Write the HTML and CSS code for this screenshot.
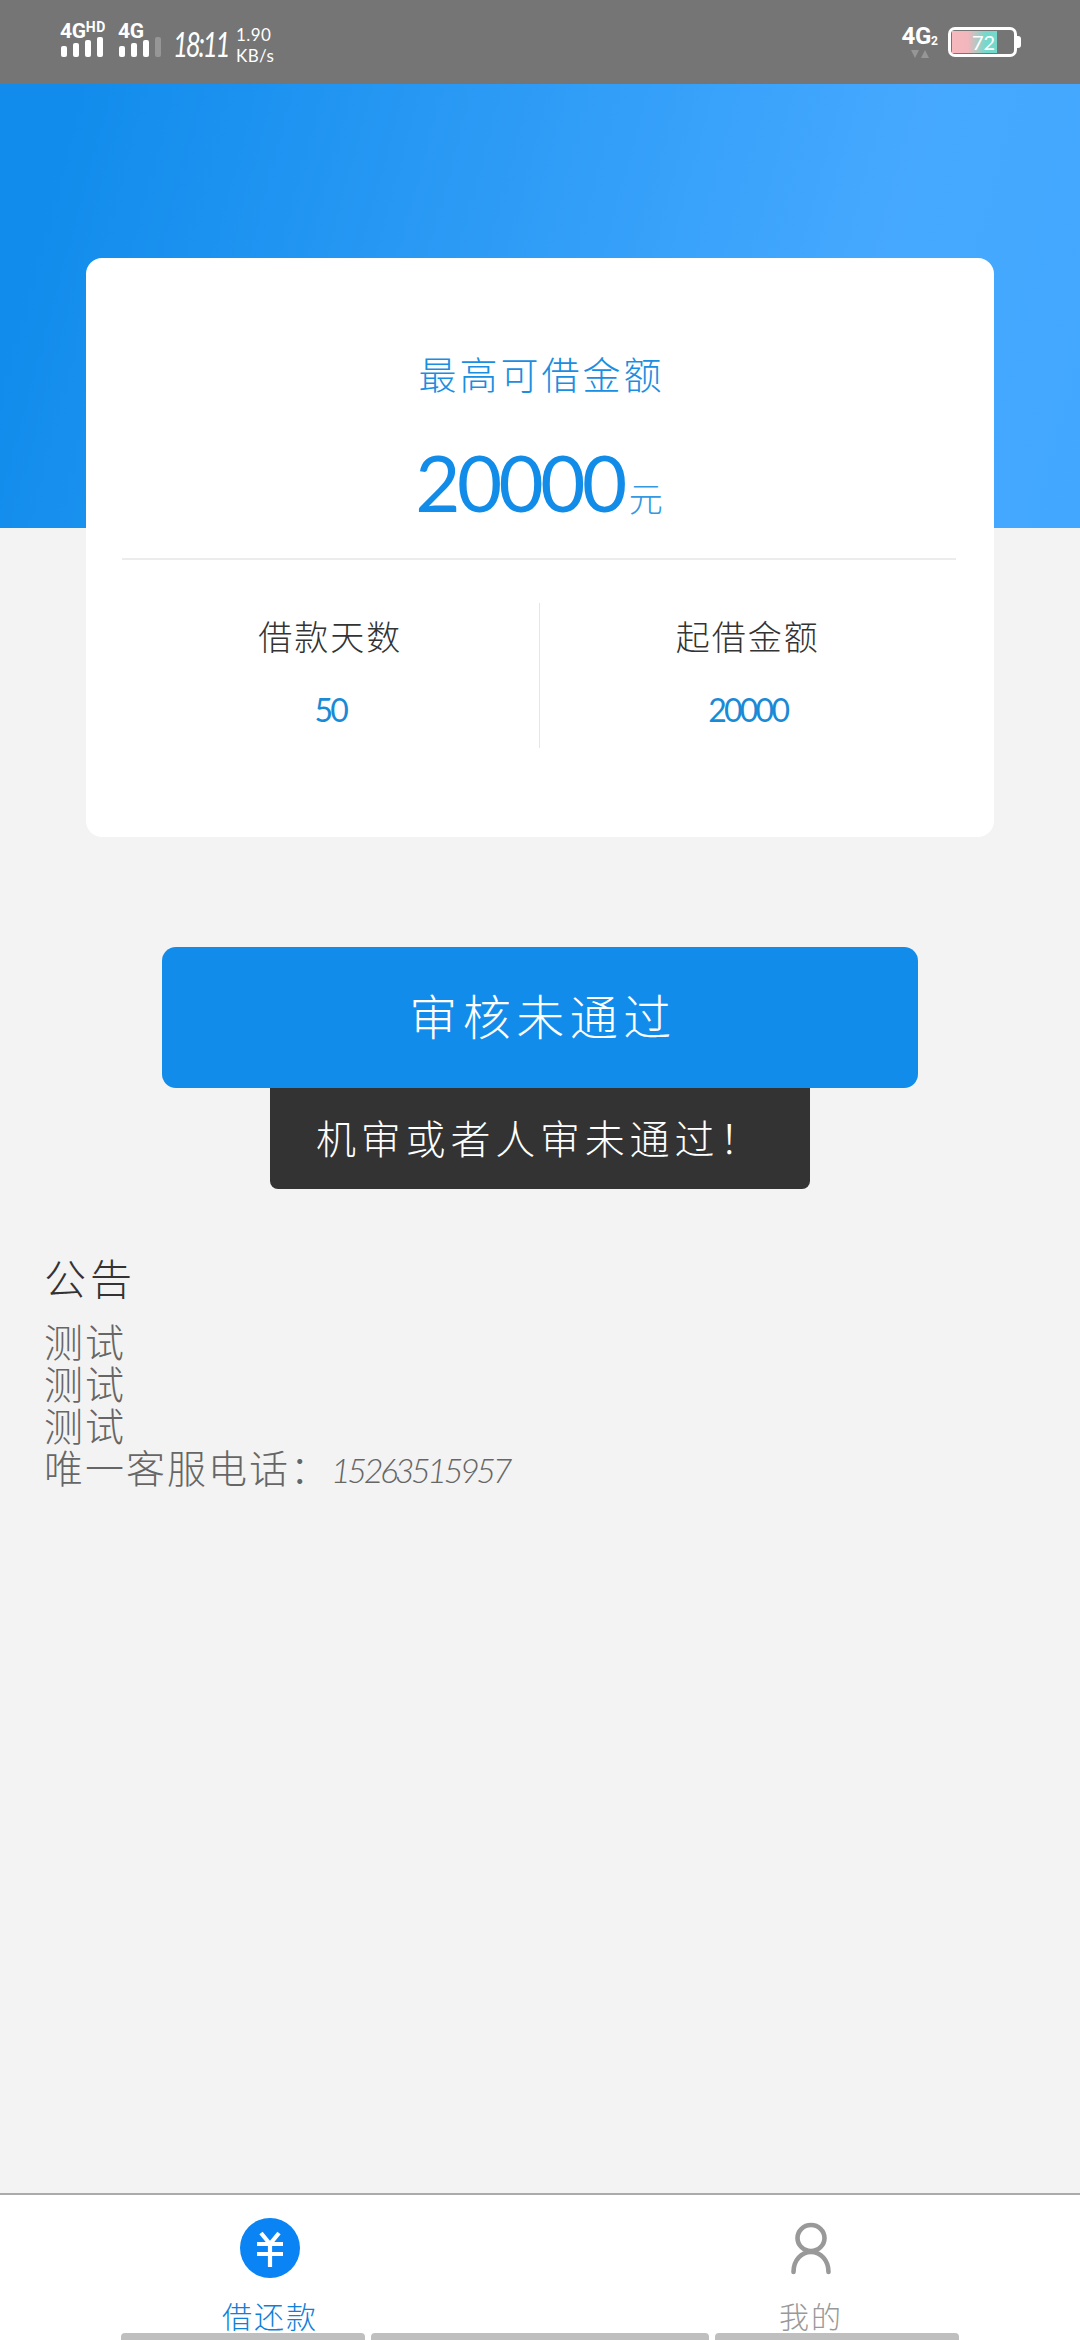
FILE: index.html
```html
<!DOCTYPE html>
<html lang="zh-CN">
<head>
<meta charset="utf-8">
<title>借还款</title>
<link rel="stylesheet" href="styles.css">
</head>
<body>
<div class="screen">
  <header class="status">
    <div class="status-left">
      <div class="signal signal-first">
        <div class="net"><span>4G</span><span class="hd">HD</span></div>
        <div class="bars"><i class="b1"></i><i class="b2"></i><i class="b3"></i><i class="b4"></i></div>
      </div>
      <div class="signal signal-second">
        <div class="net"><span>4G</span></div>
        <div class="bars"><i class="b1"></i><i class="b2"></i><i class="b3"></i><i class="b4 off"></i></div>
      </div>
      <div class="time"><span class="time-text">18:11</span></div>
      <div class="speed"><span>1.90</span><span>KB/s</span></div>
    </div>
    <div class="status-right">
      <div class="sim2">
        <div class="net"><span>4G</span><span class="two">2</span></div>
        <svg class="updown" width="18" height="8" viewBox="0 0 18 8"><path d="M0 0h8L4 8zM10 8h8L14 0z" fill="#969696"/></svg>
      </div>
      <div class="battery">
        <div class="cell"><div class="charge"></div><span class="level">72</span></div>
        <div class="nub"></div>
      </div>
    </div>
  </header>

  <main class="main">
    <section class="card">
      <div class="quota-title">最高可借金额</div>
      <div class="quota"><span class="quota-num">20000</span><span class="quota-unit">元</span></div>
      <div class="stats">
        <div class="stat">
          <div class="stat-label">借款天数</div>
          <div class="stat-value">50</div>
        </div>
        <div class="stat stat-divided">
          <div class="stat-label">起借金额</div>
          <div class="stat-value">20000</div>
        </div>
      </div>
    </section>

    <button class="action" type="button">审核未通过</button>
    <div class="toast">机审或者人审未通过！</div>

    <section class="notice">
      <h2 class="notice-title">公告</h2>
      <p class="notice-line">测试</p>
      <p class="notice-line">测试</p>
      <p class="notice-line">测试</p>
      <p class="notice-line">唯一客服电话：<span class="phone">15263515957</span></p>
    </section>
  </main>

  <nav class="tabs">
    <div class="tab tab-active">
      <svg class="tab-icon" width="60" height="60" viewBox="0 0 60 60">
        <circle cx="30" cy="30" r="30" fill="#0a84f4"/>
        <path d="M21 15l9 11 9-11M17 26h26M17 36h26M30 26v23" fill="none" stroke="#fff" stroke-width="4.2"/>
      </svg>
      <span class="tab-label">借还款</span>
    </div>
    <div class="tab">
      <svg class="tab-icon" width="60" height="60" viewBox="0 0 60 60">
        <ellipse cx="30" cy="20" rx="13.5" ry="13" fill="none" stroke="#999" stroke-width="4.6"/>
        <path d="M12.5 54c0-12 8-20 17.5-20s17.5 8 17.5 20" fill="none" stroke="#999" stroke-width="4.6" stroke-linecap="round"/>
      </svg>
      <span class="tab-label">我的</span>
    </div>
    <div class="nav-strip"><i class="strip-a"></i><i class="strip-b"></i><i class="strip-c"></i></div>
  </nav>
</div>
</body>
</html>
```
FILE: styles.css
```css
* { box-sizing: border-box; }
html, body { margin: 0; padding: 0; }
body {
  width: 1080px;
  height: 2340px;
  overflow: hidden;
  font-family: "Noto Sans CJK SC", "Noto Sans", sans-serif;
  font-weight: 300;
}
.screen { display: flex; flex-direction: column; width: 1080px; height: 2340px; background: #f3f3f3; }

/* status bar */
.status {
  flex: 0 0 84px;
  display: flex;
  justify-content: space-between;
  background: #757575;
  color: #fff;
  padding: 0 59px 0 60px;
}
.status-left { display: flex; align-items: flex-start; }
.signal { display: flex; flex-direction: column; padding-top: 21px; }
.signal-first { width: 58px; }
.signal-second { width: 55px; }
.net { display: flex; font-family: Roboto, sans-serif; font-weight: 700; font-size: 21px; line-height: 20px; height: 20px; letter-spacing: -.3px; }
.hd { font-size: 14px; line-height: 13px; letter-spacing: .5px; }
.bars { display: flex; align-items: flex-end; gap: 6px; height: 20px; margin-top: -4px; padding-left: 1px; }
.bars i { display: block; width: 6px; background: #fff; border-radius: 2px; }
.b1 { height: 11px; }
.b2 { height: 14px; }
.b3 { height: 17px; }
.b4 { height: 20px; }
.bars .off { background: #969696; }
.time { font-family: Lato, sans-serif; font-weight: 400; font-style: italic; font-size: 35px; line-height: 30px; padding-top: 28px; width: 63px; white-space: nowrap; }
.time-text { display: inline-block; letter-spacing: -3px; transform: scaleX(.74); transform-origin: left center; }
.speed { display: flex; flex-direction: column; font-family: Lato, sans-serif; font-weight: 400; font-size: 17px; line-height: 21px; padding-top: 24px; letter-spacing: .4px; }
.status-right { display: flex; align-items: flex-start; }
.sim2 { display: flex; flex-direction: column; align-items: center; width: 33px; padding-top: 26px; margin-right: 12px; }
.sim2 .net { font-size: 24px; }
.two { font-size: 12px; line-height: 30px; }
.updown { margin-top: 4px; }
.battery { display: flex; align-items: center; padding-top: 27px; }
.cell {
  position: relative;
  width: 69px;
  height: 30px;
  border: 3px solid #fff;
  border-radius: 7px;
  padding: 1px;
}
.charge { width: 45px; height: 22px; background: linear-gradient(90deg, #f6b8bd 0, #f3b6bc 35%, #74d9cb 75%, #74d9cb 100%); }
.level { position: absolute; left: 21px; top: 0; font-family: Lato, sans-serif; font-weight: 400; font-size: 20px; line-height: 24px; color: #fff; }
.nub { width: 4px; height: 12px; background: #fff; border-radius: 0 3px 3px 0; }

/* body */
.main {
  flex: 1 1 auto;
  display: flex;
  flex-direction: column;
  padding-top: 174px;
  background: linear-gradient(105deg, #118cec 6%, #46a9ff 78%, #42a7ff 100%) top left / 100% 444px no-repeat;
}
.card {
  align-self: center;
  width: 908px;
  height: 579px;
  padding: 87px 38px 0 36px;
  background: #fff;
  border-radius: 16px;
  text-align: center;
}
.quota-title { padding-left: 5px; font-size: 38px; line-height: 56px; color: #1a8ee0; letter-spacing: 3px; }
.quota { display: flex; justify-content: center; align-items: baseline; height: 100px; margin-top: 31px; color: #118ce8; }
.quota-num { font-family: Lato, sans-serif; font-weight: 400; font-size: 78px; line-height: 100px; letter-spacing: -3.5px; }
.quota-unit { font-size: 34px; margin-left: 5px; color: #3598e2; }
.stats { display: flex; margin-top: 26px; padding-top: 43px; border-top: 2px solid #ececec; }
.stat { flex: 1 1 0; height: 145px; }
.stat-divided { border-left: 1px solid #e6e6e6; }
.stat-label { font-size: 34px; line-height: 50px; color: #333; letter-spacing: 2px; margin-top: 8px; }
.stat-value { font-family: Lato, sans-serif; font-weight: 400; font-size: 32px; line-height: 40px; letter-spacing: -2.8px; color: #1a8ad6; margin-top: 29px; }

.action {
  align-self: center;
  width: 756px;
  height: 141px;
  margin-top: 110px;
  padding: 0 0 8px 6px;
  border: 0;
  border-radius: 14px;
  background: #118ceb;
  color: #fff;
  font: inherit;
  font-size: 48px;
  letter-spacing: 5.5px;
}
.toast {
  align-self: center;
  width: 540px;
  height: 101px;
  padding-left: 46px;
  background: #333;
  border-radius: 0 0 8px 8px;
  color: #fff;
  font-size: 40px;
  line-height: 98px;
  letter-spacing: 4.8px;
  white-space: nowrap;
}
.notice { padding: 56px 0 0 44px; color: #666; }
.notice-title { margin: 0 0 10px; font-size: 42px; line-height: 64px; font-weight: 300; letter-spacing: 4px; color: #333; }
.notice-line { margin: 0; font-size: 39px; line-height: 42px; letter-spacing: 2px; white-space: nowrap; }
.phone { font-family: Lato, sans-serif; font-weight: 300; font-style: italic; font-size: 34px; letter-spacing: -3.4px; margin-left: 0; }

/* tab bar */
.tabs {
  position: relative;
  flex: 0 0 147px;
  display: flex;
  gap: 241px;
  padding: 23px 0 0 120px;
  background: #fff;
  border-top: 2px solid #aaa;
}
.tab { display: flex; flex-direction: column; align-items: center; width: 300px; color: #999; }
.tab-active { color: #0f80d8; }
.tab-icon { display: block; }
.tab-label { margin-top: 15px; font-size: 30px; line-height: 44px; letter-spacing: 2px; white-space: nowrap; }
.nav-strip { position: absolute; left: 121px; bottom: 0; display: flex; gap: 6px; }
.nav-strip i { display: block; height: 7px; background: #bfbfbf; border-radius: 4px 4px 0 0; }
.strip-a { width: 244px; }
.strip-b { width: 338px; }
.strip-c { width: 244px; }
```
